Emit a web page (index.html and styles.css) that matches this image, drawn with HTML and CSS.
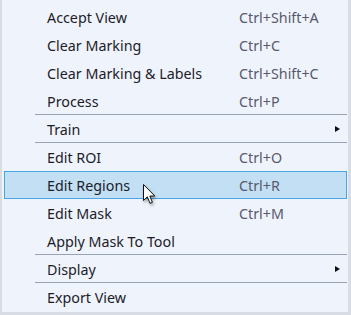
FILE: index.html
```html
<!DOCTYPE html>
<html>
<head>
<meta charset="utf-8">
<link rel="stylesheet" href="styles.css">
</head>
<body>
<div class="menu">
  <div class="item"><span class="label">Accept View</span><span class="key">Ctrl+Shift+A</span></div>
  <div class="item"><span class="label">Clear Marking</span><span class="key">Ctrl+C</span></div>
  <div class="item"><span class="label">Clear Marking &amp; Labels</span><span class="key">Ctrl+Shift+C</span></div>
  <div class="item sep"><span class="label">Process</span><span class="key">Ctrl+P</span></div>
  <div class="item sep"><span class="label">Train</span><span class="key"></span><span class="arrow"></span></div>
  <div class="item"><span class="label">Edit ROI</span><span class="key">Ctrl+O</span></div>
  <div class="item hover"><span class="label">Edit Regions</span><span class="key">Ctrl+R</span>
    <svg class="cursor" width="14" height="22" viewBox="0 0 14 22"><path d="M0.5 0.5 L0.5 16.5 L4.3 12.8 L7 19.3 L9.4 18.3 L6.8 12 L11.8 12 Z" fill="#fff" stroke="#111" stroke-width="1" stroke-linejoin="miter"/></svg>
  </div>
  <div class="item"><span class="label">Edit Mask</span><span class="key">Ctrl+M</span></div>
  <div class="item sep"><span class="label">Apply Mask To Tool</span><span class="key"></span></div>
  <div class="item sep"><span class="label">Display</span><span class="key"></span><span class="arrow"></span></div>
  <div class="item"><span class="label">Export View</span><span class="key"></span></div>
</div>
</body>
</html>
```
FILE: styles.css
```css
html, body {
  margin: 0;
  padding: 0;
  background: #eef2fb;
}
.menu {
  box-sizing: border-box;
  width: 351px;
  height: 315px;
  background: #eff3fc;
  border-style: solid;
  border-color: #d8dce5;
  border-width: 0 3px 3px 2px;
  padding: 3px 1px 0 2px;
  font-family: "Noto Sans", "Open Sans", sans-serif;
  font-size: 14.3px;
  color: #1c1c28;
}
.item {
  position: relative;
  box-sizing: border-box;
  height: 28px;
  display: grid;
  grid-template-columns: 192px 1fr 12px;
  align-items: center;
  padding-left: 43px;
}
.item.sep {
  background: linear-gradient(#97a2b3, #97a2b3) no-repeat right bottom / calc(100% - 31px) 1px;
}
.item.hover {
  background: #c2dff4;
  border: 1px solid #4aa6e2;
  padding-left: 42px;
}
.key {
  color: #585a6c;
}
.arrow {
  width: 0;
  height: 0;
  border-top: 3.5px solid transparent;
  border-bottom: 3.5px solid transparent;
  border-left: 5px solid #111;
  justify-self: start;
}
.cursor {
  position: absolute;
  left: 138px;
  top: 12px;
  filter: drop-shadow(1px 2px 1.5px rgba(0,0,0,0.35));
}
```
